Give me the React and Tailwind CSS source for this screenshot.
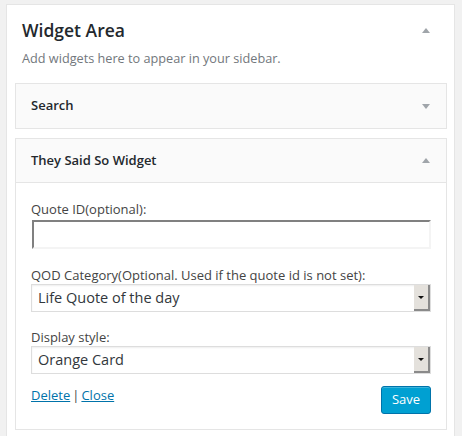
import React from "react";

function Arrow({ up }) {
  return (
    <svg width="8" height="5" viewBox="0 0 8 5" className="shrink-0">
      {up ? <path d="M0 5 L4 0 L8 5 Z" fill="#a0a5aa" /> : <path d="M0 0 L8 0 L4 5 Z" fill="#a0a5aa" />}
    </svg>
  );
}

function FakeSelect({ value }) {
  return (
    <div className="flex h-[28px] w-[400px] border border-[#dddddd] bg-white shadow-[inset_0_1px_2px_rgba(0,0,0,0.07)]">
      <div className="flex flex-1 items-center pl-[6px] text-[14.5px] text-[#32373c]">{value}</div>
      <div className="flex w-[16px] items-center justify-center border-r-2 border-b-2 border-[#8a8a8a] bg-[#e4e1dc]">
        <svg width="6" height="3" viewBox="0 0 6 3">
          <path d="M0 0 L6 0 L3 3 Z" fill="#111" />
        </svg>
      </div>
    </div>
  );
}

export default function App() {
  return (
    <div className="h-[436px] w-[462px] overflow-hidden bg-[#f1f1f1] pl-[6px] pt-[4px] font-['Open_Sans',sans-serif]">
      <div className="h-[460px] w-[449px] border border-[#e5e5e5] bg-white">
        <div className="flex items-center justify-between pl-[15px] pr-[24px] pt-[12px]">
          <h2 className="text-[17.5px] font-semibold leading-[26px] text-[#23282d]">Widget Area</h2>
          <Arrow up />
        </div>
        <p className="mt-[6px] pl-[15px] text-[12.7px] leading-[18px] text-[#72777c]">Add widgets here to appear in your sidebar.</p>

        <div className="ml-[8px] mt-[16px] w-[432px]">
          <div className="flex h-[46px] items-center justify-between border border-[#e5e5e5] bg-[#fafafa] pl-[15px] pr-[16px]">
            <span className="text-[13px] font-semibold text-[#23282d]">Search</span>
            <Arrow />
          </div>

          <div className="mt-[9px] border border-[#e5e5e5] bg-white">
            <div className="flex h-[44px] items-center justify-between border-b border-[#e5e5e5] bg-[#fafafa] pl-[15px] pr-[16px]">
              <span className="text-[13px] font-semibold text-[#23282d]">They Said So Widget</span>
              <Arrow up />
            </div>
            <div className="pl-[15px] pt-[18px] pb-[15px]">
              <label className="block text-[13px] leading-[16px] text-[#444444]">Quote ID(optional):</label>
              <div className="ml-[1px] mt-[3px] h-[29px] w-[399px] border-2 border-t-[#808080] border-l-[#808080] border-r-[#f4f4f4] border-b-[#f4f4f4] bg-white" />

              <label className="mt-[18px] block text-[13px] leading-[16px] text-[#444444]">QOD Category(Optional. Used if the quote id is not set):</label>
              <div className="mt-[1px]">
                <FakeSelect value="Life Quote of the day" />
              </div>

              <label className="mt-[17px] block text-[13px] leading-[16px] text-[#444444]">Display style:</label>
              <div className="mt-[1px]">
                <FakeSelect value="Orange Card" />
              </div>

              <div className="mt-[12px] flex w-[400px] items-start justify-between">
                <div className="text-[13px] leading-[18px] text-[#444444]">
                  <a className="text-[#0073aa] underline" href="#">Delete</a>
                  <span className="mx-[2px]">|</span>
                  <a className="text-[#0073aa] underline" href="#">Close</a>
                </div>
                <button className="h-[28px] w-[50px] rounded-[3px] border border-[#0073aa] bg-[#00a0d2] text-[13px] text-white shadow-[inset_0_1px_0_rgba(120,200,230,0.5)]">
                  Save
                </button>
              </div>
            </div>
          </div>
        </div>
      </div>
    </div>
  );
}
